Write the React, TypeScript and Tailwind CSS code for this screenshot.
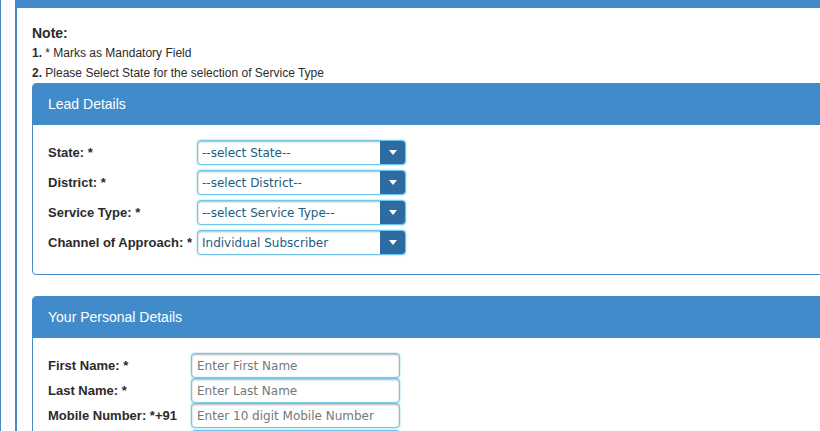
import React from "react";

const BLUE = "#428bca";

function Panel({ title, children }: { title: string; children: React.ReactNode }) {
  return (
    <div className="w-[820px] rounded-[4px] border border-[#428bca] overflow-hidden">
      <div className="h-[41px] bg-[#428bca] pl-[15px] flex items-center text-[14px] text-white font-['Liberation_Sans',Arial,sans-serif]">
        {title}
      </div>
      {children}
    </div>
  );
}

function SelectBox({ value }: { value: string }) {
  return (
    <div className="w-[209px] h-[25px] flex rounded-[4px] border border-[#72c6ec] shadow-[inset_0_1px_2px_rgba(0,0,0,0.3),0_0_2px_#7fd0f2] overflow-hidden bg-white">
      <div className="flex-1 flex items-center pl-[4px] text-[12px] text-[#1d5d80] font-['DejaVu_Sans',Verdana,sans-serif] whitespace-nowrap">
        {value}
      </div>
      <div className="w-[25px] bg-[#2d6ca2] flex items-center justify-center">
        <svg width="8" height="5" viewBox="0 0 8 5">
          <path d="M0 0h8L4 5z" fill="#fff" />
        </svg>
      </div>
    </div>
  );
}

function TextBox({ placeholder }: { placeholder: string }) {
  return (
    <div className="w-[209px] h-[25px] flex items-center pl-[5px] rounded-[4px] border border-[#72c6ec] shadow-[inset_0_1px_2px_rgba(0,0,0,0.3),0_0_2px_#7fd0f2] bg-white text-[12px] text-[#777] font-['DejaVu_Sans',Verdana,sans-serif] whitespace-nowrap">
      {placeholder}
    </div>
  );
}

const leadRows = [
  { label: "State: *", value: "--select State--" },
  { label: "District: *", value: "--select District--" },
  { label: "Service Type: *", value: "--select Service Type--" },
  { label: "Channel of Approach: *", value: "Individual Subscriber" },
];

export default function App() {
  return (
    <div className="w-[820px] h-[431px] overflow-hidden bg-white border-l border-[#428bca] font-['Liberation_Sans',Arial,sans-serif] text-[#2b2b2b]">
      <div className="ml-[14px] border-l-2 border-[#428bca] min-h-full">
        <div className="h-[8px]" style={{ background: BLUE }} />
        <div className="pl-[15px] pt-[15px]">
          <div className="text-[14px] font-bold leading-[20px]">Note:</div>
          <div className="text-[12px] leading-[20px]">
            <b>1.</b> * Marks as Mandatory Field
          </div>
          <div className="text-[12px] leading-[20px]">
            <b>2.</b> Please Select State for the selection of Service Type
          </div>

          <Panel title="Lead Details">
            <div className="pt-[15px] pb-[19px] pl-[15px] flex flex-col gap-[5px]">
              {leadRows.map((r) => (
                <div key={r.label} className="flex items-center">
                  <div className="w-[149px] text-[13px] font-bold whitespace-nowrap">{r.label}</div>
                  <SelectBox value={r.value} />
                </div>
              ))}
            </div>
          </Panel>

          <div className="h-[21px]" />

          <Panel title="Your Personal Details">
            <div className="pt-[15px] pl-[15px] flex flex-col pb-[20px]">
              <div className="flex items-start">
                <div className="w-[143px] pt-[3px] text-[13px] font-bold whitespace-nowrap">First Name: *</div>
                <TextBox placeholder="Enter First Name" />
              </div>
              <div className="flex items-start">
                <div className="w-[143px] pt-[3px] text-[13px] font-bold whitespace-nowrap">Last Name: *</div>
                <TextBox placeholder="Enter Last Name" />
              </div>
              <div className="flex items-start">
                <div className="w-[143px] pt-[3px] text-[13px] font-bold whitespace-nowrap">Mobile Number: *+91</div>
                <TextBox placeholder="Enter 10 digit Mobile Number" />
              </div>
              <div className="flex items-start mt-[2px]">
                <div className="w-[143px]" />
                <TextBox placeholder="" />
              </div>
            </div>
          </Panel>
        </div>
      </div>
    </div>
  );
}
